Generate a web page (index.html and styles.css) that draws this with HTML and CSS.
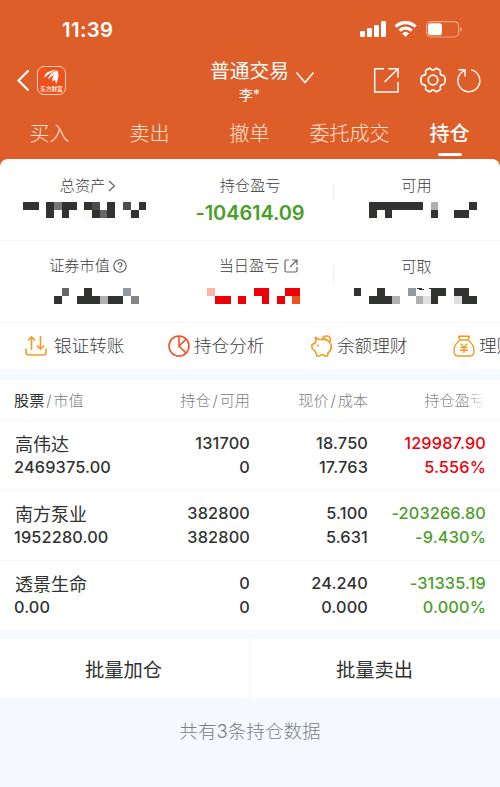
FILE: index.html
```html
<!DOCTYPE html>
<html lang="zh-CN">
<head>
<meta charset="utf-8">
<title>持仓</title>
<link rel="stylesheet" href="styles.css">
</head>
<body>
<div class="app">
  <header class="top">
    <div class="status">
      <span class="time">11:39</span>
      <svg class="signals" width="104" height="18" viewBox="0 0 104 18">
        <g fill="#fff"><rect x="0" y="11" width="5" height="6" rx="1.2"/><rect x="7" y="8" width="5" height="9" rx="1.2"/><rect x="14" y="5" width="5" height="12" rx="1.2"/><rect x="21" y="1" width="5" height="16" rx="1.2"/></g>
        <g fill="none" stroke="#fff" stroke-width="3.2"><path d="M35.7 6.6a14.3 14.3 0 0 1 19.8 0"/><path d="M39.5 10.6a9 9 0 0 1 12.2 0"/></g>
        <path d="M42.2 13.4a5 5 0 0 1 6.8 0L45.600 17z" fill="#fff"/>
        <rect x="66.600" y="1.600" width="32" height="15.400" rx="4.500" fill="none" stroke="#f3a77f" stroke-width="1.200"/>
        <rect x="68" y="3.200" width="14" height="12" rx="2.800" fill="#fff"/>
        <path d="M100.300 7v5q1.700-.8 1.700-2.500t-1.700-2.500z" fill="#f3a77f"/>
      </svg>
    </div>
    <div class="nav">
      <div class="nav-left">
        <svg width="14" height="24" viewBox="0 0 14 24" fill="none" stroke="#fff" stroke-width="2.200"><path d="M11.500 2.500L1.500 12.500L11.500 22.500"/></svg>
        <div class="logo">
          <svg width="17" height="17" viewBox="0 0 17 17" fill="#fff"><path d="M1.500 9C1 4 6 1.500 13.500 1C9 3 5 5 1.500 9zM5 10.500C6 5.500 10 3 14.500 1.300C12.500 5 9 7 5 10.500zM9.500 12.500C8.500 8 12 4.500 14.500 1.800C16.500 6 15 11 13 15.500C13 13 12.500 12 11.500 10.500C11 11.500 10.500 12 9.500 12.500z"/></svg>
          <span>东方财富</span>
        </div>
      </div>
      <div class="account">
        <div class="account-type">普通交易<svg width="20" height="14" viewBox="0 0 20 14" fill="none" stroke="#fff" stroke-width="1.500"><path d="M1.500 1.500L10 11.500L18.500 1.500"/></svg></div>
        <div class="account-name">李*</div>
      </div>
      <div class="nav-right">
        <svg width="27" height="28" viewBox="0 0 27 28" fill="none" stroke="#fff" stroke-width="1.500"><path d="M11 2.700H1.700V26H25V16M15.500 2.700H25V11.500M25 2.700L11.500 16"/></svg>
        <svg width="28" height="28" viewBox="0 0 28 28" fill="none" stroke="#fff" stroke-width="1.700" stroke-linejoin="round"><path d="M10.200 2.400Q11.400 1.900 12.200 3.200Q14 5.300 15.800 3.200Q16.600 1.900 17.800 2.400L20.800 4.100Q21.900 4.900 21.300 6.100Q20.700 8.900 23.500 9.400Q25.200 9.300 25.600 10.700Q26.800 14 25.600 17.300Q25.200 18.700 23.500 18.600Q20.700 19.100 21.300 21.900Q21.900 23.100 20.800 23.900L17.800 25.600Q16.600 26.100 15.800 24.800Q14 22.700 12.200 24.800Q11.400 26.100 10.200 25.600L7.200 23.900Q6.100 23.100 6.700 21.900Q7.300 19.100 4.500 18.600Q2.800 18.700 2.400 17.300Q1.200 14 2.400 10.700Q2.800 9.300 4.500 9.400Q7.300 8.900 6.700 6.100Q6.100 4.900 7.200 4.100Z"/><circle cx="14" cy="14" r="4.800"/></svg>
        <svg width="26" height="26" viewBox="0 0 26 26" fill="none" stroke="#fff" stroke-width="1.400"><path d="M15 2.900A11 11 0 1 1 8.500 3.600M2.500 2.800H9V9.500"/></svg>
      </div>
    </div>
    <nav class="tabs"><span>买入</span><span>卖出</span><span>撤单</span><span>委托成交</span><span class="active">持仓</span></nav>
  </header>

  <section class="assets">
    <div class="cell">
      <div class="label first">总资产<svg width="8" height="14" viewBox="0 0 8 14" fill="none" stroke="#666" stroke-width="1.300"><path d="M1 2L6.500 7L1 12"/></svg></div>
      <svg class="mosaic" viewBox="0 0 167 16" shape-rendering="crispEdges"><g fill="#303330"><path d="M23 0h16v8h-16zM46 0h8v16h-8zM62 0h15v8h-8v8h-7zM84 0h8v8h-8zM107 0h8v16h-8zM92 8h8v8h-8zM131 8h8v8h-8zM139 0h7v8h-7z"/></g><path fill="#777" d="M54 0h8v8h-8z"/><path fill="#4b4e4b" d="M92 0h8v8h-8zM123 0h8v8h-8z"/><path fill="#666" d="M100 8h7v8h-7z"/><path fill="#fff8f3" d="M84 8h8v8h-8z"/></svg>
    </div>
    <div class="cell">
      <div class="label">持仓盈亏</div>
      <div class="loss">-104614.09</div>
    </div>
    <div class="cell">
      <div class="label">可用</div>
      <svg class="mosaic" viewBox="333 0 167 16" shape-rendering="crispEdges"><path fill="#303330" d="M369 0h54v8h-31v8h-7v-8h-8v8h-8zM431 8h7v8h-7zM454 8h15v8h-15zM469 0h8v8h-8z"/><path fill="#b0b0b0" d="M431 0h7v8h-7z"/></svg>
    </div>
    <div class="cell">
      <div class="label first">证券市值<svg class="help" width="14" height="14" viewBox="0 0 14 14" fill="none" stroke="#555" stroke-width="1.100"><circle cx="7" cy="7" r="6.200"/><path d="M5 5.600Q5.100 3.700 7 3.700T9 5.400Q9 6.300 7.900 7Q7 7.500 7 8.600M7 9.700V11"/></svg></div>
      <svg class="mosaic" viewBox="0 0 167 16" shape-rendering="crispEdges"><path fill="#303330" d="M54 8h8v8h-8zM77 8h7v-8h8v8h8v8h-23zM108 8h15v8h-15z"/><path fill="#666" d="M62 0h7v8h-7z"/><path fill="#b0b0b0" d="M100 8h8v8h-8z"/><path fill="#9299a0" d="M123 0h8v8h-8z"/><path fill="#858585" d="M131 8h8v8h-8z"/></svg>
    </div>
    <div class="cell">
      <div class="label today">当日盈亏<svg width="14" height="14" viewBox="0 0 14 14" fill="none" stroke="#666" stroke-width="1.200"><path d="M5 1H2.500Q1 1 1 2.500V11.500Q1 13 2.500 13H11.500Q13 13 13 11.500V8M8 1H13V6M13 1L6 8"/></svg></div>
      <svg class="mosaic" viewBox="167 0 166 16" shape-rendering="crispEdges"><path fill="#f9b5a5" d="M207 0h8v8h-8z"/><path fill="#ed0007" d="M215 8h16v8h-16zM238 8h8v8h-8zM254 0h15v16h-7v-8h-8zM277 8h8v8h-8zM285 0h15v8h-15z"/><path fill="#ee501f" d="M292 8h8v8h-8z"/></svg>
    </div>
    <div class="cell">
      <div class="label lower">可取</div>
      <svg class="mosaic" viewBox="333 0 167 16" shape-rendering="crispEdges"><path fill="#303330" d="M354 0h7v8h-7zM369 8h8v-8h8v8h7v8h-23zM431 0h15v8h-8v8h-7zM454 0h15v8h8v8h-15v-8h-8zM417 0h5v1h2v1h-5v-1h-2zM429 0h4v1h-4z"/><path fill="#b0b0b0" d="M392 8h8v8h-8zM416 8h7v8h-7z"/><path fill="#9299a0" d="M408 0h8v8h-8z"/><path fill="#e0e0e0" d="M423 8h8v8h-8zM454 8h8v8h-8z"/></svg>
    </div>
  </section>

  <section class="shortcuts">
    <div class="shortcut transfer"><svg width="22" height="22" viewBox="0 0 22 22" fill="none" stroke="#f49a22" stroke-width="1.600"><path d="M1 13.500V17Q1 20 4 20H18Q21 20 21 17V13.500M6.500 15V2M3 5.500L6.500 2L10 5.500M15.500 1V14M12 10.500L15.500 14L19 10.500"/></svg>银证转账</div>
    <div class="shortcut analysis"><svg width="22" height="22" viewBox="0 0 22 22" fill="none" stroke="#ed5425" stroke-width="1.600"><circle cx="11" cy="11" r="10"/><path d="M11 1V11L18 4.200M11 11L18 18"/></svg>持仓分析</div>
    <div class="shortcut balance"><svg width="22" height="22" viewBox="0 0 22 22" fill="none" stroke="#f49a22" stroke-width="1.600" stroke-linejoin="round"><path d="M4.500 2.500L8 4.500H14Q20 6 20.300 11.500Q20.300 15.500 17 18L16.500 21H13.500L13 20H9.500L9 21H6L5 18L3.500 15.500L1 13.500V9.500L3.500 8.500L5 6.500ZM11.500 4.500Q12 1 15.500 1Q19.500 1 19.500 4.800Q19.500 7 17.500 7M11.500 4.500Q14 3 16 5"/><path d="M6 10.500h2"/></svg>余额理财</div>
    <div class="shortcut wealth"><svg width="22" height="22" viewBox="0 0 22 22" fill="none" stroke="#f49a22" stroke-width="1.400" stroke-linejoin="round"><path d="M7 5L5.500 1.200H16.500L15 5ZM7 5Q1 9.500 1 15.500Q1 21 5 21H17Q21 21 21 15.500Q21 9.500 15 5M7.800 8.800L11 12.200L14.200 8.800M11 12.200V18M7 12.600H15M7 15.200H15"/></svg>理财</div>
  </section>

  <section class="holdings">
    <div class="row head"><div><b>股票</b><i>/</i>市值</div><div>持仓<i>/</i>可用</div><div>现价<i>/</i>成本</div><div><span class="fade">持仓盈亏</span></div></div>
    <div class="row">
      <div><p class="name">高伟达</p><p>2469375.00</p></div><div><p>131700</p><p>0</p></div><div><p>18.750</p><p>17.763</p></div><div class="up"><p>129987.90</p><p>5.556%</p></div>
    </div>
    <div class="row">
      <div><p class="name">南方泵业</p><p>1952280.00</p></div><div><p>382800</p><p>382800</p></div><div><p>5.100</p><p>5.631</p></div><div class="down"><p>-203266.80</p><p>-9.430%</p></div>
    </div>
    <div class="row">
      <div><p class="name">透景生命</p><p>0.00</p></div><div><p>0</p><p>0</p></div><div><p>24.240</p><p>0.000</p></div><div class="down"><p>-31335.19</p><p>0.000%</p></div>
    </div>
  </section>
  <div class="actions"><div>批量加仓</div><div>批量卖出</div></div>
  <footer>共有3条持仓数据</footer>
</div>
</body>
</html>
```
FILE: styles.css
```css
* { box-sizing: border-box; }
body { margin: 0; background: #f6f9ff; }
p { margin: 0; }
svg { display: block; flex: none; }
.app {
  width: 500px; height: 787px; overflow: hidden;
  font-family: Inter, "Noto Sans CJK SC", sans-serif;
  color: #303330; white-space: nowrap;
}
.top { height: 169px; background: #de5e29; color: #fff; }
.status { height: 56px; padding: 4px 36px 0 62px; display: flex; justify-content: space-between; align-items: center; }
.time { font-size: 20.300px; font-weight: 600; line-height: 24px; letter-spacing: .4px; }
.signals { margin-top: -2px; }
.nav { height: 52px; display: grid; grid-template-columns: 180px 1fr 130px; }
.nav-left { display: flex; align-items: center; gap: 6px; padding: 0 0 4px 17px; }
.logo {
  width: 29px; height: 29px; border: 1px solid #ffd5bd; border-radius: 7px; background: #f0511b;
  display: flex; flex-direction: column; align-items: center; padding-top: 2px;
}
.logo span { font-size: 5.600px; line-height: 7px; font-weight: 500; }
.account-type { height: 30px; line-height: 32px; font-size: 19.800px; display: flex; align-items: center; gap: 6px; padding-left: 30px; }
.account-type svg { margin-top: 14px; }
.account-name { font-size: 14px; line-height: 18px; padding-left: 59px; }
.nav-right { display: flex; align-items: center; padding: 0 0 4px 3px; }
.nav-right svg + svg { margin-left: 19px; }
.nav-right svg:last-child { margin-left: 9px; }
.tabs { display: grid; grid-template-columns: repeat(5, 1fr); height: 51px; text-align: center; font-size: 20px; line-height: 52px; font-weight: 300; color: #ffe2d0; }
.tabs span { margin-left: -1px; }
.tabs .active { color: #fff; font-weight: 500; height: 49px; display: flex; flex-direction: column; align-items: center; }
.active::after { content: ""; width: 24px; height: 3px; border-radius: 2px; background: #fff; margin-top: -7px; flex: none; }

.assets { height: 164px; margin-top: -10px; background: #fff; border-radius: 8px 8px 0 0; display: grid; grid-template: 82px 82px / 167px 166px 167px; }
.cell { border-bottom: 1px solid #f5f6f7; }
.label { height: 43px; padding-top: 10px; line-height: 22px; font-size: 15.200px; font-weight: 300; color: #3c3c3c; display: flex; justify-content: center; align-items: center; }
.first { padding-left: 9px; gap: 3px; }
.today { padding-left: 17px; gap: 5px; }
.cell:nth-child(n+4) .label { height: 46.500px; padding-top: 3px; }
.cell:nth-child(n+4) .lower { padding-top: 6px; }
.cell:nth-child(3n) { background: linear-gradient(#eee, #eee) 0 24px / 1px 18px no-repeat; }
.loss { font-size: 20px; line-height: 22px; font-weight: 600; letter-spacing: -.1px; color: #4a9e29; text-align: center; }
.mosaic { width: 100%; height: 16px; }

.shortcuts { height: 46px; background: #fff; display: grid; grid-template-columns: 142px 142px 142px 74px; overflow: hidden; font-size: 17.600px; color: #3c3c3c; font-weight: 300; }
.shortcut { display: flex; align-items: center; gap: 7px; padding-left: 25px; line-height: 44px; }
.analysis { padding-left: 26px; gap: 4px; }
.balance { padding-left: 27px; gap: 4px; }
.wealth { padding-left: 27px; gap: 4px; }

.holdings { margin-top: 11px; background: #fff; }
.row { display: grid; grid-template-columns: 132px 104px 118px 118px; height: 70px; padding: 10px 14px 0; border-bottom: 1px solid #f7f8fa; text-align: right; font-size: 16.300px; font-weight: 550; line-height: 24px; letter-spacing: .15px; }
.row > :first-child { text-align: left; }
.row .name { font-size: 18px; font-weight: 400; line-height: 28px; height: 24px; padding-left: 1px; letter-spacing: 0; }
.row.head { height: 41px; padding-top: 9px; font-size: 15.200px; font-weight: 300; color: #7c8083; letter-spacing: 0; }
.head b { font-weight: 400; color: #303330; }
.head i { font-style: normal; padding: 0 1.800px; }
.fade { display: inline-block; margin-right: 1px; background: linear-gradient(90deg, #7c8083 72%, #fff 100%); background-clip: text; -webkit-background-clip: text; color: transparent; }
.up { color: #ed0007; }
.down { color: #4a9e29; }

.actions { margin-top: 8px; height: 59px; display: grid; grid-template-columns: 1fr 1fr; gap: 2px; text-align: center; font-size: 19.300px; line-height: 63px; }
.actions div { background: #fff; height: 59px; padding-right: 2px; }
footer { text-align: center; padding-top: 19px; font-size: 18.600px; line-height: 28px; font-weight: 300; color: #7c8083; }
```
